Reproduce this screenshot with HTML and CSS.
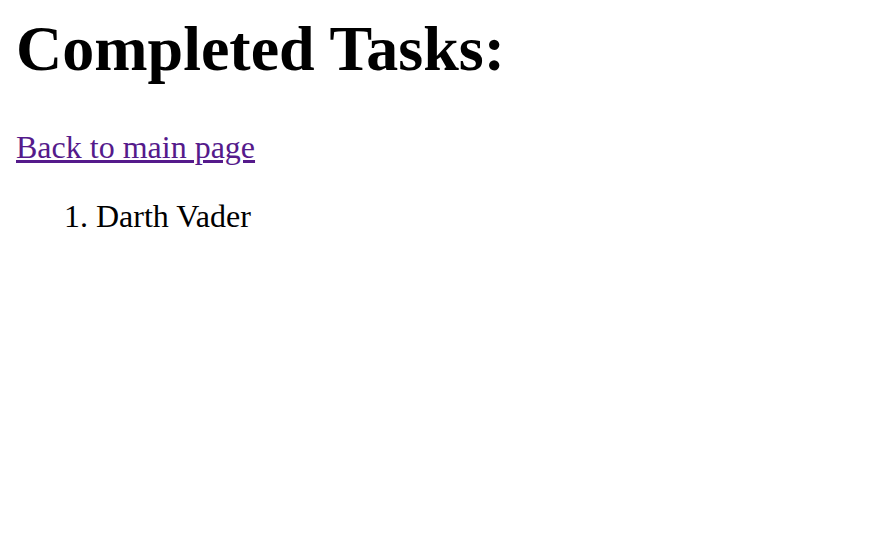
FILE: index.html
```html
<!DOCTYPE html>
<html>
<head>
<meta charset="utf-8">
<link rel="stylesheet" href="styles.css">
</head>
<body class="page">
<h1 class="title">Completed Tasks:</h1>
<a class="back" href="#">Back to main page</a>
<ol class="tasks">
<li>Darth Vader</li>
</ol>
</body>
</html>
```

FILE: styles.css
```css
.page {
  margin: 0 16px 16px;
  padding-top: 12px;
  font-family: "Liberation Serif", "Times New Roman", serif;
  font-size: 32px;
  color: #000;
  background: #fff;
}
.title {
  font-size: 64px;
  font-weight: bold;
  margin: 0 0 42.88px;
  line-height: normal;
}
.back {
  color: #551a8b;
  text-decoration: underline;
}
.tasks {
  margin: 32px 0;
  padding-left: 80px;
}
```
